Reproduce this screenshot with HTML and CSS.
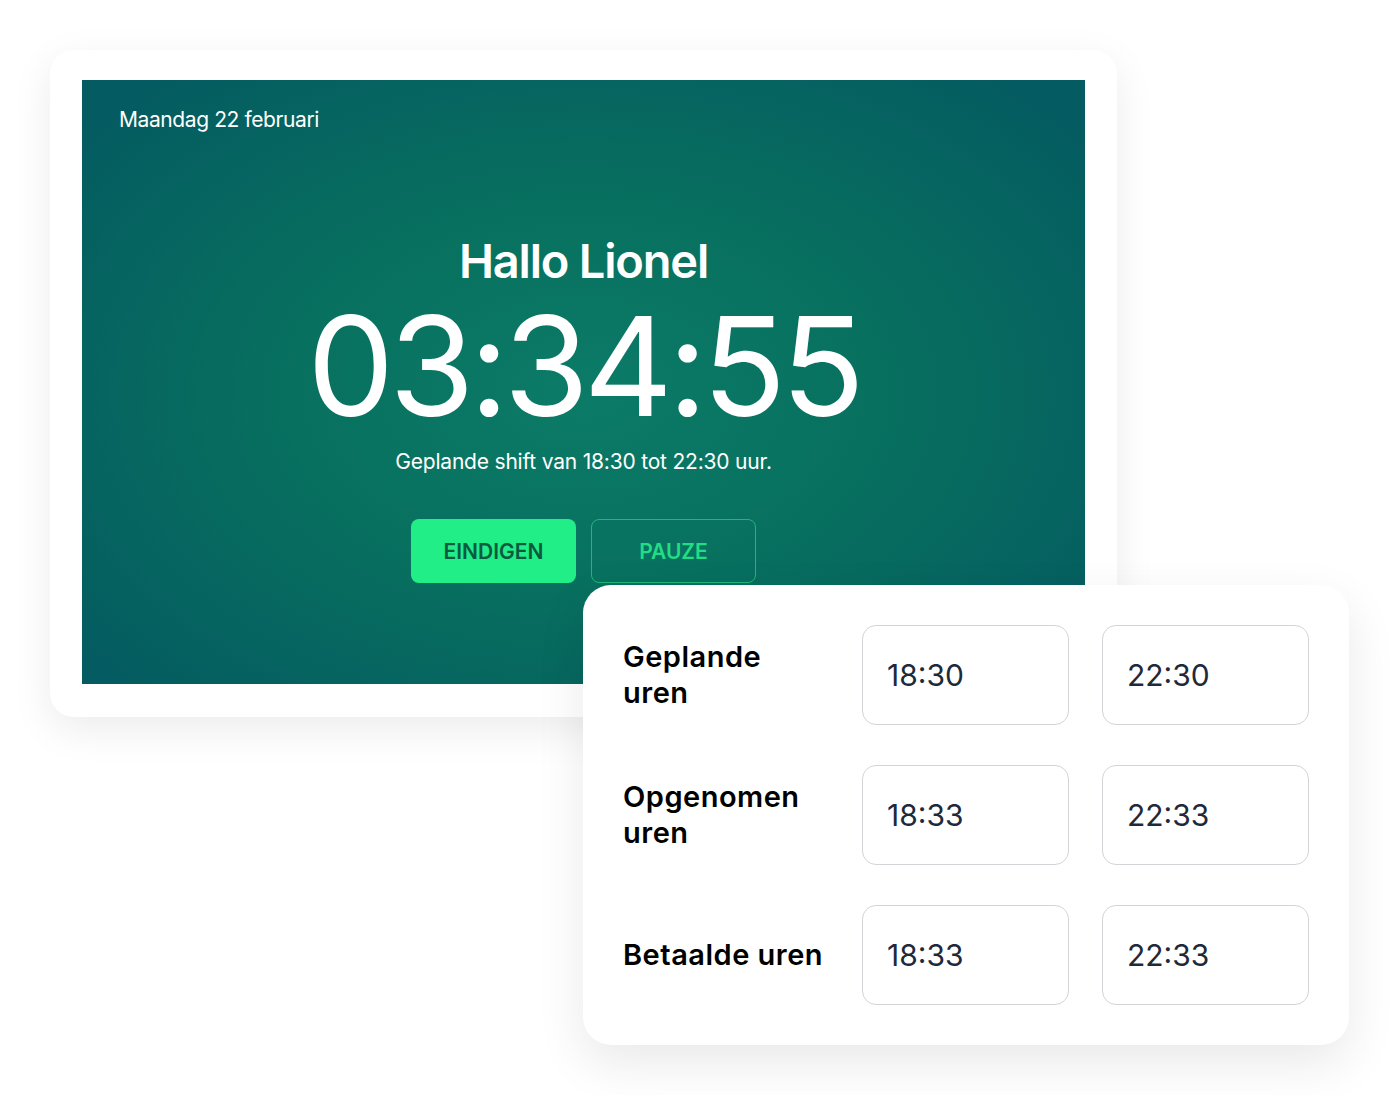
FILE: index.html
```html
<!DOCTYPE html>
<html lang="nl">
<head>
    <meta charset="UTF-8">
    <title>Tijdregistratie</title>
    <link rel="stylesheet" href="styles.css">
</head>
<body>
<div class="stage">
    <!-- Tablet with clock screen -->
    <div class="tablet">
        <div class="screen">
            <div class="date">Maandag 22 februari</div>
            <div class="clock-block">
                <h1 class="greeting">Hallo Lionel</h1>
                <div class="clock">03:34:55</div>
                <p class="shift">Geplande shift van 18:30 tot 22:30 uur.</p>
                <div class="buttons">
                    <button class="btn btn-end">EINDIGEN</button>
                    <button class="btn btn-pause">PAUZE</button>
                </div>
            </div>
        </div>
    </div>

    <!-- Hours card -->
    <div class="hours-card">
        <div class="hours-label">Geplande<br>uren</div>
        <div class="time-box">18:30</div>
        <div class="time-box">22:30</div>

        <div class="hours-label">Opgenomen<br>uren</div>
        <div class="time-box">18:33</div>
        <div class="time-box">22:33</div>

        <div class="hours-label">Betaalde uren</div>
        <div class="time-box">18:33</div>
        <div class="time-box">22:33</div>
    </div>
</div>
</body>
</html>
```

FILE: styles.css
```css
body { margin: 0; background: #fff; font-family: Inter, "Noto Sans", sans-serif; }
.stage { position: relative; width: 1400px; height: 1095px; overflow: hidden; }

.tablet { margin: 50px 0 0 50px; width: 1067px; height: 667px; box-sizing: border-box; padding: 30px 32px 33px 32px; background: #fff; border-radius: 24px; box-shadow: 0 12px 40px rgba(0, 0, 0, 0.08); }
.screen { height: 100%; box-sizing: border-box; padding: 27px 37px; color: #fff; background: radial-gradient(ellipse 65% 70% at 50% 52%, #0b7b67 0%, #08705f 45%, #045b61 100%); display: flex; flex-direction: column; }
.date { font-size: 21px; letter-spacing: -0.4px; line-height: 26px; }

.clock-block { display: flex; flex-direction: column; align-items: center; margin-top: 104px; }
.greeting { margin: 0; font-size: 47px; font-weight: 600; letter-spacing: -1.2px; line-height: 48px; }
.clock { font-size: 138px; font-weight: 400; letter-spacing: -5.2px; line-height: 120px; margin-top: 21px; }
.shift { margin: 23px 0 0; font-size: 21px; letter-spacing: -0.2px; line-height: 26px; }

.buttons { display: flex; gap: 15px; margin-top: 44px; }
.btn { width: 165px; height: 64px; border-radius: 8px; font-family: inherit; font-size: 21px; font-weight: 600; letter-spacing: 0; cursor: pointer; }
.btn-end { background: #22ee88; color: #0b5a3f; border: none; }
.btn-pause { background: transparent; color: #22dd84; border: 1px solid #1fb77a; }

.hours-card { position: absolute; left: 583px; top: 585px; width: 766px; box-sizing: border-box; padding: 40px; background: #fff; border-radius: 28px; box-shadow: 0 18px 50px rgba(0, 0, 0, 0.09); display: grid; grid-template-columns: 1fr 207px 207px; column-gap: 33px; row-gap: 40px; }
.hours-label { align-self: center; font-size: 29px; font-weight: 600; line-height: 36px; color: #000; letter-spacing: 0.5px; }
.time-box { height: 100px; box-sizing: border-box; border: 1px solid #d4d4d8; border-radius: 14px; padding-left: 24px; display: flex; align-items: center; font-size: 30px; color: #1e293b; }
```
